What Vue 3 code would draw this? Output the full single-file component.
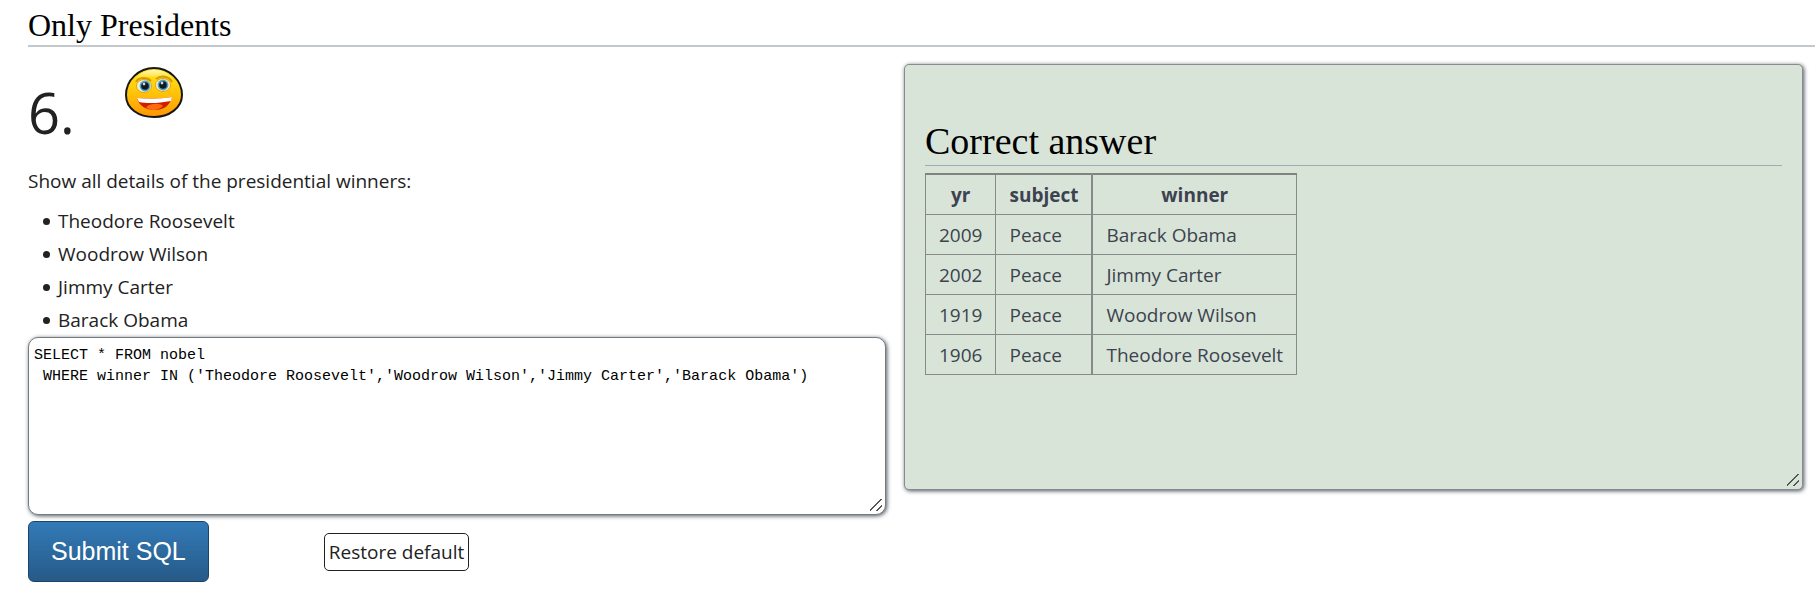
<template>
  <main class="page">
    <h2 class="section-title">Only Presidents</h2>
    <div class="columns">
      <section class="question">
        <div class="question-head">
          <span class="question-number">6.</span>
          <svg class="smiley" viewBox="0 0 58 51" role="img" aria-label="Correct">
            <defs>
              <linearGradient id="face" x1="0" y1="0" x2="0" y2="1">
                <stop offset="0" stop-color="#ffe81a" />
                <stop offset="0.45" stop-color="#ffc90a" />
                <stop offset="1" stop-color="#ff9500" />
              </linearGradient>
              <linearGradient id="shine" x1="0" y1="0" x2="0" y2="1">
                <stop offset="0" stop-color="#fff" stop-opacity="0.7" />
                <stop offset="1" stop-color="#fff" stop-opacity="0" />
              </linearGradient>
            </defs>
            <path d="M29 1C44 1 57 13 57 28C57 41 44 50 29 50C14 50 1 42 1 28C1 13 14 1 29 1Z" fill="url(#face)" stroke="#161616" stroke-width="2" />
            <path d="M29 3C38 3 45 7 49 12C41 9 17 9 10 12C14 7 20 3 29 3Z" fill="url(#shine)" />
            <path d="M11 15C13 10 22 10 26 14M31 12C36 8 44 9 47 15" fill="none" stroke="#d99a00" stroke-width="2" />
            <ellipse cx="19" cy="19" rx="7.5" ry="6.5" fill="#f3efdf" stroke="#e2a310" />
            <ellipse cx="38" cy="18" rx="7.5" ry="6.5" fill="#f3efdf" stroke="#e2a310" />
            <circle cx="20" cy="19" r="5.4" fill="#4aa6c2" />
            <circle cx="38" cy="18" r="5.4" fill="#4aa6c2" />
            <circle cx="20" cy="19" r="3.8" fill="#101820" />
            <circle cx="38" cy="18" r="3.8" fill="#101820" />
            <circle cx="19" cy="17" r="1.4" fill="#cdd9df" />
            <circle cx="37" cy="16" r="1.4" fill="#cdd9df" />
            <path d="M12 31C23 32 36 32 47 30C45 39 38 43 30 43C21 43 14 39 12 31Z" fill="#cf1d00" />
            <path d="M21 40C26 36 35 36 38 39C33 44 25 44 21 40Z" fill="#ff6a10" />
            <path d="M12 31C23 32 36 32 47 30L46 34C35 36 23 37 14 35Z" fill="#fff" />
          </svg>
        </div>
        <p class="prompt">Show all details of the presidential winners:</p>
        <ul class="names">
          <li v-for="name in presidents" :key="name">{{ name }}</li>
        </ul>
        <textarea v-model="sql" class="editor" aria-label="SQL query" spellcheck="false"></textarea>
        <div class="actions">
          <button type="button" class="submit">Submit SQL</button>
          <button type="button" class="restore" @click="sql = defaultSql">Restore default</button>
        </div>
      </section>

      <section class="answer">
        <h1 class="answer-title">Correct answer</h1>
        <table class="result">
          <thead>
            <tr>
              <th>yr</th>
              <th>subject</th>
              <th>winner</th>
            </tr>
          </thead>
          <tbody>
            <tr v-for="row in rows" :key="row.yr">
              <td>{{ row.yr }}</td>
              <td>{{ row.subject }}</td>
              <td>{{ row.winner }}</td>
            </tr>
          </tbody>
        </table>
      </section>
    </div>
  </main>
</template>

<script setup>
import { ref } from 'vue'

const presidents = ['Theodore Roosevelt', 'Woodrow Wilson', 'Jimmy Carter', 'Barack Obama']

const defaultSql = `SELECT * FROM nobel
 WHERE winner IN ('Theodore Roosevelt','Woodrow Wilson','Jimmy Carter','Barack Obama')`

const sql = ref(defaultSql)

const rows = [
  { yr: 2009, subject: 'Peace', winner: 'Barack Obama' },
  { yr: 2002, subject: 'Peace', winner: 'Jimmy Carter' },
  { yr: 1919, subject: 'Peace', winner: 'Woodrow Wilson' },
  { yr: 1906, subject: 'Peace', winner: 'Theodore Roosevelt' }
]
</script>

<style>
body {
  background: #fff;
}
</style>

<style scoped>
.page {
  padding: 7px 0 8px 28px;
  color: #222;
  font-family: 'Open Sans', 'Noto Sans CJK KR', sans-serif;
  font-size: 19px;
  line-height: 33px;
}

.section-title,
.answer-title {
  margin: 0;
  color: #000;
  font-family: Georgia, 'Liberation Serif', serif;
  font-weight: 400;
}

.section-title {
  padding-bottom: 2px;
  border-bottom: 2px solid #c3c8cc;
  font-size: 32px;
  line-height: 36px;
}

.columns {
  display: grid;
  grid-template-columns: 858fr 899fr;
  gap: 18px;
  align-items: start;
  padding: 17px 12px 0 0;
}

.question-head {
  display: flex;
  align-items: flex-start;
  gap: 50px;
  height: 101px;
}

.question-number {
  padding-top: 14px;
  font-size: 56px;
  line-height: 68px;
}

.smiley {
  width: 58px;
  height: 51px;
  margin-top: 3px;
}

.prompt {
  margin: 0 0 7px;
}

.names {
  margin: 0;
  padding-left: 15px;
  list-style: none;
}

.names li {
  display: flex;
  align-items: center;
  gap: 8px;
}

.names li::before {
  width: 7px;
  height: 7px;
  border-radius: 50%;
  background: #222;
  content: '';
}

.editor {
  display: block;
  box-sizing: border-box;
  width: 100%;
  height: 178px;
  padding: 7px 5px;
  border: 1px solid #777c80;
  border-radius: 10px;
  box-shadow: 1px 1px 4px #4a5560;
  color: #000;
  background: #fff;
  font-family: 'Liberation Mono', monospace;
  font-size: 15px;
  line-height: 21px;
}

.editor::-webkit-resizer,
.answer::-webkit-resizer {
  background: linear-gradient(135deg, transparent 44%, #555 44% 54%, transparent 54% 71%, #555 71% 81%, transparent 81%) 0 0 / 12px 12px no-repeat;
}

.actions {
  display: flex;
  align-items: center;
  gap: 115px;
  margin-top: 6px;
}

.submit {
  height: 61px;
  padding: 0 22px;
  border: 1px solid #1d4468;
  border-radius: 6px;
  color: #fff;
  background: linear-gradient(#337ab7, #265a88);
  font-family: 'Liberation Sans', sans-serif;
  font-size: 25px;
}

.restore {
  height: 38px;
  padding: 0 4px;
  border: 1px solid #222;
  border-radius: 5px;
  color: #222;
  background: #fff;
  font-family: inherit;
  font-size: 19px;
}

.answer {
  box-sizing: border-box;
  height: 426px;
  padding: 53px 20px 20px;
  overflow: auto;
  resize: both;
  border: 1px solid #8a8a90;
  border-radius: 5px;
  box-shadow: 1px 1px 4px #4a5060;
  color: #3c434e;
  background: #d9e4d9;
}

.answer-title {
  margin-bottom: 7px;
  padding-bottom: 1px;
  border-bottom: 1px solid #a2a9b1;
  font-size: 38px;
  line-height: 46px;
}

.result {
  border-collapse: collapse;
  border-top: 2px solid #808382;
}

.result th,
.result td {
  height: 39px;
  padding: 0 13px;
  border: 1px solid #868a88;
  line-height: 38px;
  text-align: left;
  white-space: nowrap;
}

.result th {
  text-align: center;
}

.result th:nth-child(2),
.result td:nth-child(2) {
  border-right-width: 2px;
}
</style>
